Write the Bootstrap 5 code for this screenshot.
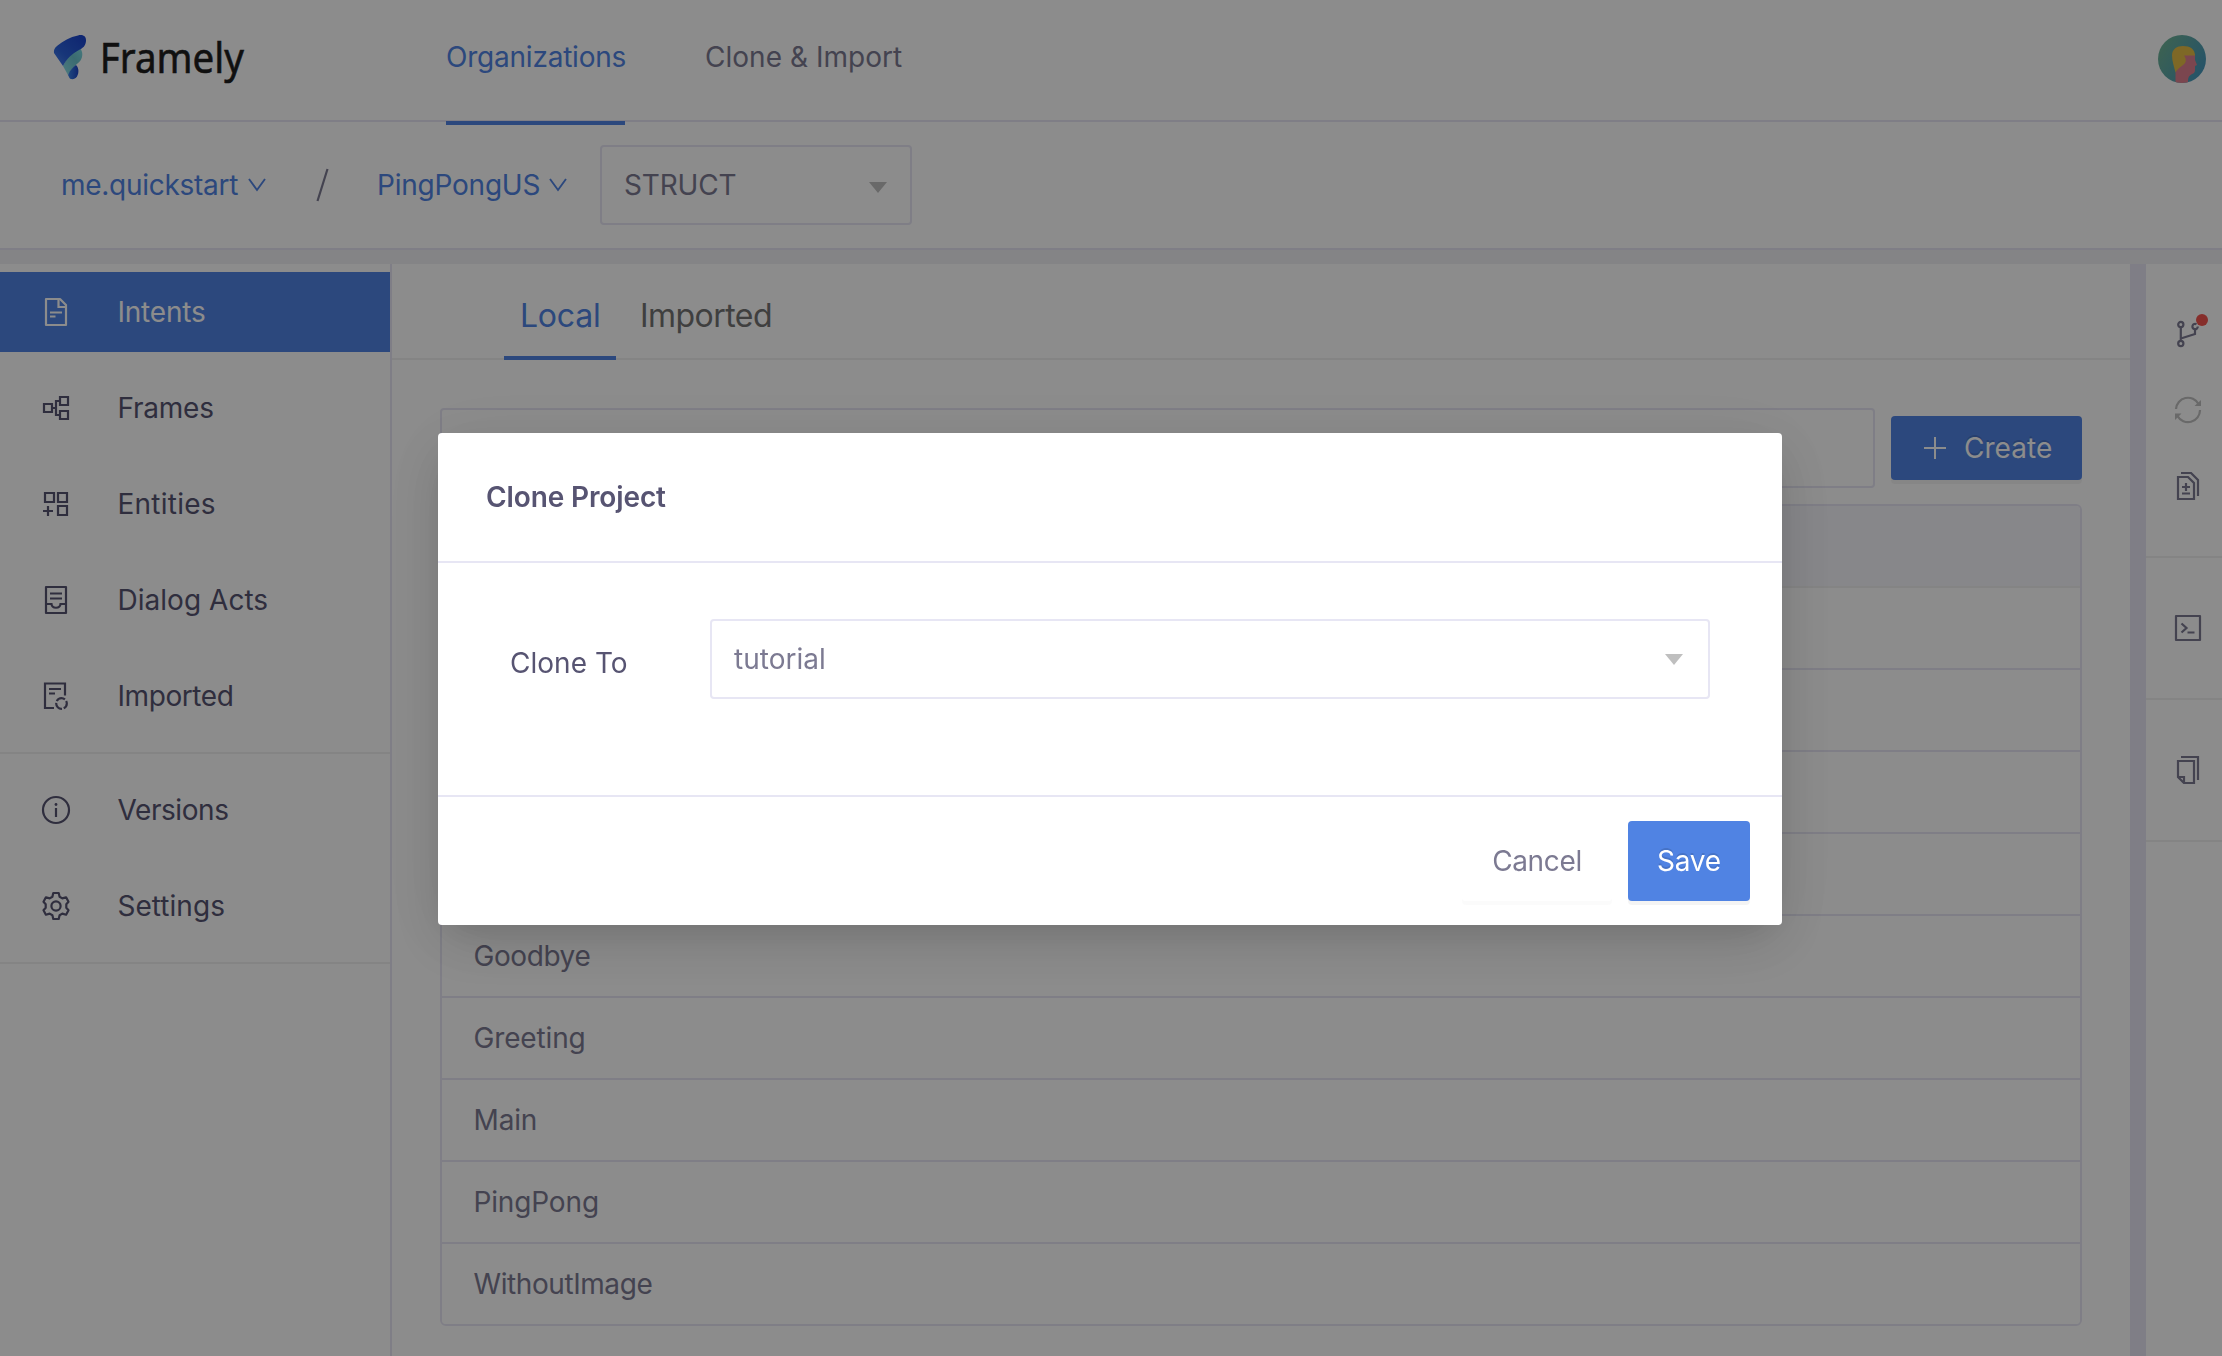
<!DOCTYPE html>
<html lang="en">
<head>
<meta charset="utf-8">
<meta name="viewport" content="width=device-width, initial-scale=1">
<title>Framely</title>
<link href="https://cdn.jsdelivr.net/npm/bootstrap@5.3.0/dist/css/bootstrap.min.css" rel="stylesheet">
<style>
:root { --brand:#5083e3; --line:#e7e6f4; --line-soft:#f0f0f0; --ink:#575472; --ink-2:#7c7a92; --wash:#f0f0f4; }
html, body { height:100%; overflow:hidden; }
body { font-family:Inter, "Liberation Sans", sans-serif; font-size:28px; line-height:40px; letter-spacing:-.22px; color:var(--ink-2); background:#fff; }
a { text-decoration:none; color:inherit; }
svg { display:block; flex:none; }
.ls-0 { letter-spacing:.03px; }
.ls-mid { letter-spacing:-.15px; }
.ls-tight { letter-spacing:-.42px; }

.topbar { height:122px; border-bottom:2px solid var(--line); padding:0 16px 0 53px; }
.topnav { height:125px; margin-bottom:-5px; }
.topnav .nav-link { height:125px; padding:37px 0 0; color:var(--ink-2); border-bottom:4px solid transparent; }
.topnav .nav-link.active { color:var(--brand); border-color:var(--brand); width:179px; }
.topnav .nav-link + .nav-link { margin-left:80px; }
.brand-box { width:393px; }
.avatar { margin-top:35px; }

.crumbs { height:128px; border-bottom:2px solid var(--line); padding-left:61px; }
.crumb-link { color:var(--brand); }
.crumb-org { width:255px; }
.crumb-org span { width:187px; letter-spacing:-.28px; }
.crumb-app { width:223px; margin-left:48px; }
.crumb-app span { width:172px; }
.pick { height:80px; border:2px solid var(--line); border-radius:4px; padding:0 23px 0 22px; background:#fff; color:var(--ink-2); }
.gutter { height:14px; background:var(--wash); }
.pick-kind { width:312px; }
.pick-kind svg { margin-top:5px; }

.shell { height:1092px; }
.side { width:392px; border-right:2px solid var(--line); }
.side-group { padding:8px 0 16px; border-bottom:2px solid var(--line-soft); }
.side-group + .side-group { padding-top:16px; }
.side-group .nav-link { height:80px; margin-bottom:16px; padding:0 0 0 40px; color:var(--ink); display:flex; align-items:center; border-radius:0; }
.side-group .nav-link:last-child { margin-bottom:0; }
.side-group .nav-link.active { background:var(--brand); color:#fff; }
.side-group svg { width:32px; height:32px; margin-right:45.5px; stroke-width:2.2; }

.main-tabs { height:96px; border-bottom:2px solid var(--line-soft); padding-left:112px; font-size:32px; }
.main-tabs .nav-link { height:96px; padding:32px 16px 0; color:#747474; }
.main-tabs .nav-link.active { color:var(--brand); width:112px; border-bottom:4px solid var(--brand); }
.main-tabs .nav-link + .nav-link { margin-left:8px; letter-spacing:-.55px; }
.work { padding:48px 48px 0; }
.search-box { height:80px; border:2px solid var(--line); border-radius:4px; font-size:28px; }
.btn { font-size:28px; line-height:40px; border-radius:4px; border:0; letter-spacing:inherit; }
.btn-brand { background:var(--brand); color:#fff; box-shadow:0 4px 0 rgba(0,0,0,.045); text-shadow:0 -2px 0 rgba(0,0,0,.12); }
.btn-create { width:191px; height:64px; padding:0 0 0 33px; margin-left:16px; gap:18px; }
.intents { margin-top:16px; border:2px solid var(--line); border-radius:6px; overflow:hidden; }
.intents-head { height:82px; background:#f6f6fb; border-bottom:2px solid var(--line-soft); }
.intents .list-group-item { height:82px; padding:0 0 0 31.500px; display:flex; align-items:center; border:0; border-bottom:2px solid var(--line); color:var(--ink-2); }
.intents .list-group-item:last-child { height:80px; border-bottom:0; }

.splitter { width:16px; background:var(--line); }
.tools { width:76px; color:var(--ink-2); }
.tools-cell { height:142px; padding-left:8px; border-bottom:2px solid var(--line-soft); }
.tools-main { height:294px; padding-top:56px; gap:48px; }
.tools svg { stroke-width:2.2; }
.tool-btn { position:relative; }
.tool-dot { position:absolute; width:12px; height:12px; border-radius:50%; background:#f5544f; left:22px; top:-6px; }

.modal-backdrop { --bs-backdrop-opacity:.45; width:100%; height:100%; }
.modal-dialog { max-width:1344px; margin:433px 0 0 438px; }
.modal-content { border:0; border-radius:4px; height:492px; color:var(--ink); box-shadow:0 12px 32px -16px rgba(0,0,0,.12), 0 18px 56px rgba(0,0,0,.12), 0 8px 80px 6px rgba(0,0,0,.05); }
.modal-header { height:130px; padding:0 48px; border-bottom:2px solid var(--line); border-radius:0; }
.modal-title { font-size:28px; line-height:40px; font-weight:600; letter-spacing:-.12px; }
.modal-body { padding:56px 72px 0; }
.modal-footer { height:130px; padding:0 32px 0 0; border-top:2px solid var(--line); flex-wrap:nowrap; }
.modal-footer > * { margin:0; }
.field-name { width:200px; padding-top:26px; line-height:36px; }
.pick-target { width:1000px; }
.pick-target svg { margin-right:2px; }
.btn-cancel { width:150px; height:80px; margin-right:16px; color:var(--ink-2); letter-spacing:-.35px; box-shadow:0 4px 0 rgba(0,0,0,.015); }
.btn-save { width:122px; height:80px; }
</style>
<script src="https://cdn.jsdelivr.net/npm/bootstrap@5.3.0/dist/js/bootstrap.bundle.min.js"></script>
</head>
<body>

<header class="topbar d-flex align-items-start justify-content-between">
  <div class="d-flex">
    <a class="brand-box" href="#" aria-label="Framely">
      <svg width="220" height="118" viewBox="53 0 220 118">
        <defs>
          <linearGradient id="lgA" x1="0" y1="1" x2="1" y2="0"><stop offset="0" stop-color="#4a86f0"/><stop offset=".35" stop-color="#2b62dc"/><stop offset="1" stop-color="#1a42cc"/></linearGradient>
          <linearGradient id="lgB" x1="0" y1="1" x2="1" y2="0"><stop offset="0" stop-color="#8ce0ea"/><stop offset=".6" stop-color="#6cc4ce"/><stop offset="1" stop-color="#7fdce4"/></linearGradient>
          <linearGradient id="lgC" x1="0" y1="0" x2="1" y2="0"><stop offset="0" stop-color="#3c86e8"/><stop offset="1" stop-color="#1b45c8"/></linearGradient>
        </defs>
        <path d="M63 66C68 56 72 50 80 48.500C83 51 83 57 80.500 60.500C77 64.500 73 66 68 75Z" fill="url(#lgB)"/>
        <path d="M68 75C70 70 73 67 76 65C79 68 79 73 77 76.500C75 79.500 71 80 69.500 78Z" fill="url(#lgC)"/>
        <path d="M54 53C53.500 50 54.500 48 57 46C63 41 70 37 78 35.500C83 34 86.500 36.500 86 41C85.500 46 83 48 79 50C72 54 67 58 63 66Z" fill="url(#lgA)"/>
        <text x="99.800" y="73" textLength="144" lengthAdjust="spacingAndGlyphs" font-family="Noto Sans, Open Sans, sans-serif" font-size="42.500" letter-spacing="0" fill="#1e1e1e" stroke="#1e1e1e" stroke-width=".6">Framely</text>
      </svg>
    </a>
    <nav class="nav topnav flex-nowrap">
      <a class="nav-link active" href="#">Organizations</a>
      <a class="nav-link ls-0" href="#">Clone &amp; Import</a>
    </nav>
  </div>
  <svg class="avatar" width="48" height="48" viewBox="0 0 48 48">
    <defs>
      <linearGradient id="av" x1="0" y1=".2" x2="1" y2=".8"><stop offset="0" stop-color="#70b494"/><stop offset="1" stop-color="#4396c0"/></linearGradient>
      <clipPath id="avc"><circle cx="24" cy="24" r="24"/></clipPath>
    </defs>
    <g clip-path="url(#avc)">
      <rect width="48" height="48" fill="url(#av)"/>
      <path d="M25 19h12v6l2 5-2 1v4q0 3-3 4-4 2-4 6v4H17.500V37z" fill="#e08090"/>
      <path d="M17.500 37.500C16 31 14 26 14 20.500C14 14 19 11 25 11C32 11 37 14 37 20.500H26C29 25 28 28 25 30C22 32.500 19 34 17.500 37.500Z" fill="#e6bd45"/>
    </g>
  </svg>
</header>

<div class="crumbs d-flex align-items-center">
  <a class="crumb-link crumb-org d-flex align-items-center" href="#"><span>me.quickstart</span>
    <svg width="18" height="14" viewBox="0 0 18 14"><path d="M1 1L9 12L17 1" fill="none" stroke="currentColor" stroke-width="1.900"/></svg></a>
  <svg width="13" height="36" viewBox="0 0 13 36"><path d="M1.500 34L11.500 2" fill="none" stroke="#7c7a92" stroke-width="2.200"/></svg>
  <a class="crumb-link crumb-app d-flex align-items-center" href="#"><span>PingPongUS</span>
    <svg width="18" height="14" viewBox="0 0 18 14"><path d="M1 1L9 12L17 1" fill="none" stroke="currentColor" stroke-width="1.900"/></svg></a>
  <div class="pick pick-kind d-flex align-items-center justify-content-between"><span class="ls-mid">STRUCT</span>
    <svg width="18" height="11" viewBox="0 0 18 11"><path d="M0 0H18L9 11Z" fill="#bfbfbf"/></svg></div>
</div>
<div class="gutter"></div>

<div class="shell d-flex">
  <aside class="side flex-shrink-0">
    <nav class="side-group nav flex-column">
      <a class="nav-link active" href="#">
        <svg viewBox="0 0 32 32" fill="none" stroke="currentColor"><path d="M6 3H20L26 9V29H6Z" stroke-linejoin="round"/><path d="M18.500 3V11H26M10 16.500H22M10 20.500H15.500"/></svg>
        <span>Intents</span></a>
      <a class="nav-link" href="#">
        <svg viewBox="0 0 32 32" fill="none" stroke="currentColor"><path d="M4 12H12V20H4ZM20 5H28V13H20ZM20 19H28V27H20ZM12 16H16M20 9H16V23H20"/></svg>
        <span>Frames</span></a>
      <a class="nav-link" href="#">
        <svg viewBox="0 0 32 32" fill="none" stroke="currentColor"><path d="M5 5H14V14H5ZM18 5H27V14H18ZM18 18H27V27H18ZM3 23H13M8 18V28"/></svg>
        <span style="letter-spacing:.25px">Entities</span></a>
      <a class="nav-link" href="#">
        <svg viewBox="0 0 32 32" fill="none" stroke="currentColor"><path d="M6 3H26V29H6Z" stroke-linejoin="round"/><path d="M10 9.500H22M10 14.500H22M6 20H11.500C12 25 20 25 20.500 20H26"/></svg>
        <span class="ls-0">Dialog Acts</span></a>
      <a class="nav-link" href="#">
        <svg viewBox="0 0 32 32" fill="none" stroke="currentColor"><path d="M14 28H5V3.500H25V15.500M9 9H21M9 13.500H15"/><circle cx="21.500" cy="23.500" r="5.300" stroke-dasharray="9.300 1.800" stroke-dashoffset="3.500"/></svg>
        <span class="ls-tight">Imported</span></a>
    </nav>
    <nav class="side-group nav flex-column">
      <a class="nav-link" href="#">
        <svg viewBox="0 0 32 32" fill="none" stroke="currentColor"><circle cx="16" cy="16" r="13"/><path d="M16 14V23"/><circle cx="16" cy="10.500" r="1.400" fill="currentColor" stroke="none"/></svg>
        <span class="ls-tight">Versions</span></a>
      <a class="nav-link" href="#">
        <svg viewBox="0 0 32 32" fill="none" stroke="currentColor" stroke-linejoin="round"><path d="M13.300 3H18.700L19.600 6.800L22.300 8.400L26.100 7.300L28.500 11.700L26.300 14.200V17.800L28.500 20.300L26.100 24.700L22.300 23.600L19.600 25.200L18.700 29H13.300L12.400 25.200L9.700 23.600L5.900 24.700L3.500 20.300L5.700 17.800V14.200L3.500 11.700L5.900 7.300L9.700 8.400L12.400 6.800Z"/><circle cx="16" cy="16" r="4.600"/></svg>
        <span class="ls-0">Settings</span></a>
    </nav>
  </aside>

  <main class="flex-grow-1">
    <nav class="nav main-tabs flex-nowrap">
      <a class="nav-link active" href="#">Local</a>
      <a class="nav-link" href="#">Imported</a>
    </nav>
    <div class="work">
      <div class="d-flex align-items-center">
        <input class="form-control search-box flex-grow-1" type="text" aria-label="Search">
        <button class="btn btn-brand btn-create d-flex align-items-center flex-shrink-0" type="button">
          <svg width="22" height="22" viewBox="0 0 22 22"><path d="M11 0V22M0 11H22" stroke="currentColor" stroke-width="2"/></svg>
          <span class="ls-0">Create</span></button>
      </div>
      <div class="intents">
        <div class="intents-head"></div>
        <ul class="list-group list-group-flush">
          <li class="list-group-item"></li>
          <li class="list-group-item"></li>
          <li class="list-group-item"></li>
          <li class="list-group-item"></li>
          <li class="list-group-item ls-tight">Goodbye</li>
          <li class="list-group-item ls-mid">Greeting</li>
          <li class="list-group-item ls-mid">Main</li>
          <li class="list-group-item ls-mid">PingPong</li>
          <li class="list-group-item ls-tight">WithoutImage</li>
        </ul>
      </div>
    </div>
  </main>

  <div class="splitter flex-shrink-0"></div>
  <aside class="tools flex-shrink-0">
    <div class="tools-cell tools-main d-flex flex-column align-items-center">
      <div class="tool-btn">
        <svg width="28" height="28" viewBox="0 0 28 28" fill="none" stroke="currentColor"><circle cx="6.800" cy="4.500" r="2.600"/><circle cx="6.800" cy="23.500" r="2.600"/><path d="M6.800 7V21M6.800 18.500L21 14V9"/><path d="M22.500 4.200A2.700 2.700 0 1 0 23.800 6.500"/></svg>
        <span class="tool-dot"></span>
      </div>
      <svg width="28" height="28" viewBox="0 0 28 28" fill="none" stroke="#bfbfbf"><path d="M2 13A12 12 0 0 1 24.500 8M26 14A12 12 0 0 1 3.500 20"/><path d="M27 4V10H20.500ZM1 24V17.500H7.500Z" fill="#bfbfbf" stroke="none"/></svg>
      <svg width="28" height="28" viewBox="0 0 28 28" fill="none" stroke="currentColor"><path d="M4 5H14L20 11V27H4Z"/><path d="M7 1H17L24 8V24M8 15H16M12 11V19M8 21.500H16"/></svg>
    </div>
    <div class="tools-cell d-flex align-items-center justify-content-center">
      <svg width="28" height="28" viewBox="0 0 28 28" fill="none" stroke="currentColor"><path d="M2 2H26V26H2Z" stroke-linejoin="round"/><path d="M7.500 9.500L12.500 14L7.500 18.500M13.500 18.500H20.500"/></svg>
    </div>
    <div class="tools-cell d-flex align-items-center justify-content-center">
      <svg width="28" height="28" viewBox="0 0 28 28" fill="none" stroke="currentColor"><path d="M4 5H20V27H10L4 21Z"/><path d="M4 21H10V27M7 1H24V24"/></svg>
    </div>
  </aside>
</div>

<div class="modal-backdrop show"></div>
<div class="modal d-block" tabindex="-1" role="dialog">
  <div class="modal-dialog">
    <div class="modal-content">
      <div class="modal-header"><h5 class="modal-title">Clone Project</h5></div>
      <div class="modal-body d-flex align-items-start">
        <label class="field-name ls-0">Clone To</label>
        <div class="pick pick-target d-flex align-items-center justify-content-between"><span class="ls-0">tutorial</span>
          <svg width="18" height="11" viewBox="0 0 18 11"><path d="M0 0H18L9 11Z" fill="#bfbfbf"/></svg></div>
      </div>
      <div class="modal-footer">
        <button class="btn btn-cancel" type="button">Cancel</button>
        <button class="btn btn-brand btn-save" type="button">Save</button>
      </div>
    </div>
  </div>
</div>
</body>
</html>
